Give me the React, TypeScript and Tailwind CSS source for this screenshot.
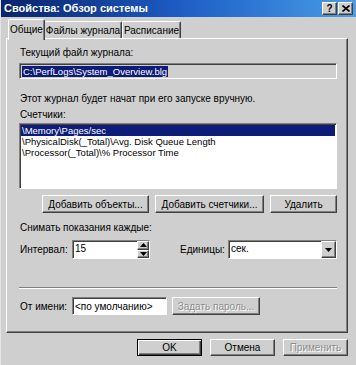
import React from 'react'

const raised =
  'border border-t-white border-l-white border-r-[#404040] border-b-[#404040] shadow-[inset_-1px_-1px_0_#808080]'
const sunken =
  'border border-t-[#808080] border-l-[#808080] border-r-white border-b-white shadow-[inset_1px_1px_0_#404040]'
const disabledText = 'text-[#8c8c8c] [text-shadow:1px_1px_0_#fff]'

type BtnProps = {
  className?: string
  children: React.ReactNode
  disabled?: boolean
  isDefault?: boolean
}

function Button({ className = '', children, disabled = false, isDefault = false }: BtnProps) {
  const frame = isDefault
    ? 'border border-black shadow-[inset_1px_1px_0_#fff,inset_-1px_-1px_0_#404040,inset_-2px_-2px_0_#808080]'
    : raised
  return (
    <div className={`${frame} flex items-center justify-center shrink-0 ${className}`}>
      <span className={disabled ? disabledText : ''}>{children}</span>
    </div>
  )
}

function CaptionButton({ children }: { children: React.ReactNode }) {
  return (
    <div className={`${raised} w-[15px] h-[13px] bg-[#cfcfcf] flex items-center justify-center`}>
      {children}
    </div>
  )
}

function Tab({ label, active = false, className = '' }: { label: string; active?: boolean; className?: string }) {
  if (active) {
    return (
      <div
        className={`relative z-10 h-[21px] -mb-[2px] bg-[#cfcfcf] border-t border-l border-t-white border-l-white border-r border-r-[#404040] shadow-[inset_-1px_0_0_#808080] rounded-t-[2px] flex items-start justify-center pt-[3px] ${className}`}
      >
        {label}
      </div>
    )
  }
  return (
    <div
      className={`h-[17px] border-t border-l border-t-white border-l-white border-r border-r-[#404040] shadow-[inset_-1px_0_0_#808080] rounded-t-[2px] flex items-start justify-center pt-[2px] ${className}`}
    >
      {label}
    </div>
  )
}

function Arrow({ down = true }: { down?: boolean }) {
  return (
    <svg width="7" height="4" viewBox="0 0 7 4">
      <path d={down ? 'M0 0H7L3.5 4Z' : 'M0 4H7L3.5 0Z'} fill="#000" />
    </svg>
  )
}

const counters = [
  '\\Memory\\Pages/sec',
  '\\PhysicalDisk(_Total)\\Avg. Disk Queue Length',
  '\\Processor(_Total)\\% Processor Time'
]

export default function App() {
  return (
    <div className="w-[356px] h-[365px] bg-[#cfcfcf] font-['Liberation_Sans',Arial,sans-serif] text-[10px] leading-[13px] text-black flex flex-col overflow-hidden border-l border-l-[#e4e4e4]">
      {/* title bar */}
      <div className="h-[17px] shrink-0 flex items-center pl-[3px] pr-[3px] gap-[1px] bg-linear-to-r from-[#0a246a] via-[#1d5cc4] to-[#4a9ce6]">
        <span className="flex-1 text-white font-bold text-[11px]">Свойства: Обзор системы</span>
        <CaptionButton>
          <span className="font-bold text-[10px] leading-[10px]">?</span>
        </CaptionButton>
        <CaptionButton>
          <svg width="8" height="7" viewBox="0 0 8 7">
            <path d="M0.5 0.5L7.5 6.5M7.5 0.5L0.5 6.5" stroke="#000" strokeWidth="1.7" />
          </svg>
        </CaptionButton>
      </div>

      {/* tabs */}
      <div className="mt-[2px] ml-[7px] h-[19px] flex items-end">
        <Tab label="Общие" active className="w-[37px]" />
        <Tab label="Файлы журнала" className="w-[77px] border-l-0" />
        <Tab label="Расписание" className="w-[59px]" />
      </div>

      {/* panel */}
      <div className="ml-[5px] w-[342px] h-[295px] shrink-0 border border-t-white border-l-white border-r-[#404040] border-b-[#404040] shadow-[inset_-1px_-1px_0_#808080] pl-[12px] pr-[10px] pt-[7px] flex flex-col">
        <div className="pl-[1px]">Текущий файл журнала:</div>
        <div className={`${sunken} mt-[4px] h-[16px] flex items-center pl-[2px] text-[9.5px]`}>
          <span className="bg-[#0c1c78] text-white leading-[11px] px-[1px]">C:\PerfLogs\System_Overview.blg</span>
        </div>

        <div className="mt-[13px] pl-[1px]">Этот журнал будет начат при его запуске вручную.</div>
        <div className="mt-[3px] pl-[1px]">Счетчики:</div>
        <div className={`${sunken} mt-[2px] h-[66px] bg-white pt-[1px] pl-[1px] pr-[1px] text-[9.5px]`}>
          {counters.map((c, i) => (
            <div
              key={c}
              className={`h-[11px] leading-[11px] pl-[1px] ${i === 0 ? 'bg-[#0c1c78] text-white' : ''}`}
            >
              {c}
            </div>
          ))}
        </div>

        <div className="mt-[6px] flex justify-end gap-[6px]">
          <Button className="w-[107px] h-[18px]">Добавить объекты...</Button>
          <Button className="w-[109px] h-[18px]">Добавить счетчики...</Button>
          <Button className="w-[67px] h-[18px]">Удалить</Button>
        </div>

        <div className="mt-[8px] pl-[1px]">Снимать показания каждые:</div>
        <div className="mt-[6px] h-[19px] flex items-center">
          <div className="w-[53px] pl-[1px]">Интервал:</div>
          <div className={`${sunken} w-[78px] h-[19px] bg-white flex`}>
            <div className="flex-1 pl-[2px] pt-[1px]">15</div>
            <div className="w-[12px] flex flex-col">
              <div className={`${raised} flex-1 bg-[#cfcfcf] flex items-center justify-center`}>
                <Arrow down={false} />
              </div>
              <div className={`${raised} flex-1 bg-[#cfcfcf] flex items-center justify-center`}>
                <Arrow />
              </div>
            </div>
          </div>
          <div className="ml-[30px] w-[48px]">Единицы:</div>
          <div className={`${sunken} flex-1 h-[19px] bg-white flex`}>
            <div className="flex-1 pl-[2px] pt-[1px]">сек.</div>
            <div className={`${raised} w-[15px] bg-[#cfcfcf] flex items-center justify-center`}>
              <Arrow />
            </div>
          </div>
        </div>

        <div className="mt-[28px] h-[2px] border-t border-t-[#808080] border-b border-b-white" />

        <div className="mt-[8px] h-[18px] flex items-center">
          <div className="w-[53px] pl-[1px]">От имени:</div>
          <div className={`${sunken} w-[95px] h-[18px] bg-white pl-[2px] flex items-center`}>
            &lt;по умолчанию&gt;
          </div>
          <Button className="ml-[5px] w-[88px] h-[18px]" disabled>
            Задать пароль...
          </Button>
        </div>
      </div>

      {/* dialog buttons */}
      <div className="mt-[6px] w-[347px] flex justify-end gap-[8px]">
        <Button className="w-[65px] h-[17px]" isDefault>
          OK
        </Button>
        <Button className="w-[65px] h-[17px]">Отмена</Button>
        <Button className="w-[65px] h-[17px]" disabled>
          Применить
        </Button>
      </div>
    </div>
  )
}
